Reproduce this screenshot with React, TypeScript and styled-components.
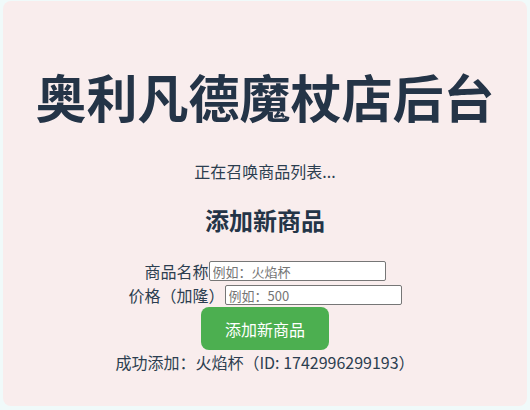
import styled, { createGlobalStyle } from 'styled-components';

const GlobalStyle = createGlobalStyle`
  html, body {
    margin: 0;
    padding: 0;
    background: #f0fafa;
  }
  body {
    font-family: "Noto Sans CJK SC", "Noto Sans", sans-serif;
    color: #2c3e50;
  }
`;

const Card = styled.main`
  margin: 1px 3px 5px;
  padding: 20px 20px 32px;
  background: #f9eded;
  border-radius: 8px;
  text-align: center;
`;

const Title = styled.h1`
  margin: 45px 0 32px;
  font-size: 51px;
  line-height: 1.2;
  font-weight: 700;
  color: #243447;
`;

const Status = styled.p`
  margin: 0;
  font-size: 16px;
  line-height: 24px;
`;

const SectionTitle = styled.h2`
  margin: 21px 0 24px;
  font-size: 24px;
  line-height: 31px;
  font-weight: 700;
  color: #243447;
`;

const Form = styled.form`
  display: flex;
  flex-direction: column;
  align-items: center;
`;

const Row = styled.label`
  display: flex;
  align-items: center;
  height: 24px;
  font-size: 16px;
`;

const Input = styled.input`
  box-sizing: border-box;
  width: 177px;
  height: 20px;
  padding: 0 3px;
  border: 1px solid #767676;
  border-radius: 2px;
  background: #fff;
  font-family: "Noto Sans CJK SC", sans-serif;
  font-size: 13px;
  color: #2c3e50;

  &::placeholder {
    color: #757575;
  }
`;

const Button = styled.button`
  height: 43px;
  padding: 0 24px;
  border: none;
  border-radius: 8px;
  background: #4caf50;
  color: #fff;
  font-family: "Noto Sans CJK SC", sans-serif;
  font-size: 16px;
  cursor: pointer;
`;

const Message = styled.p`
  margin: 0;
  font-size: 16px;
  line-height: 24px;
`;

export default function App() {
  return (
    <>
      <GlobalStyle />
      <Card>
        <Title>奥利凡德魔杖店后台</Title>
        <Status>正在召唤商品列表...</Status>
        <SectionTitle>添加新商品</SectionTitle>
        <Form onSubmit={(e) => e.preventDefault()}>
          <Row>
            商品名称
            <Input placeholder="例如：火焰杯" />
          </Row>
          <Row>
            价格（加隆）
            <Input placeholder="例如：500" />
          </Row>
          <Button type="submit">添加新商品</Button>
        </Form>
        <Message>成功添加：火焰杯（ID: 1742996299193）</Message>
      </Card>
    </>
  );
}
